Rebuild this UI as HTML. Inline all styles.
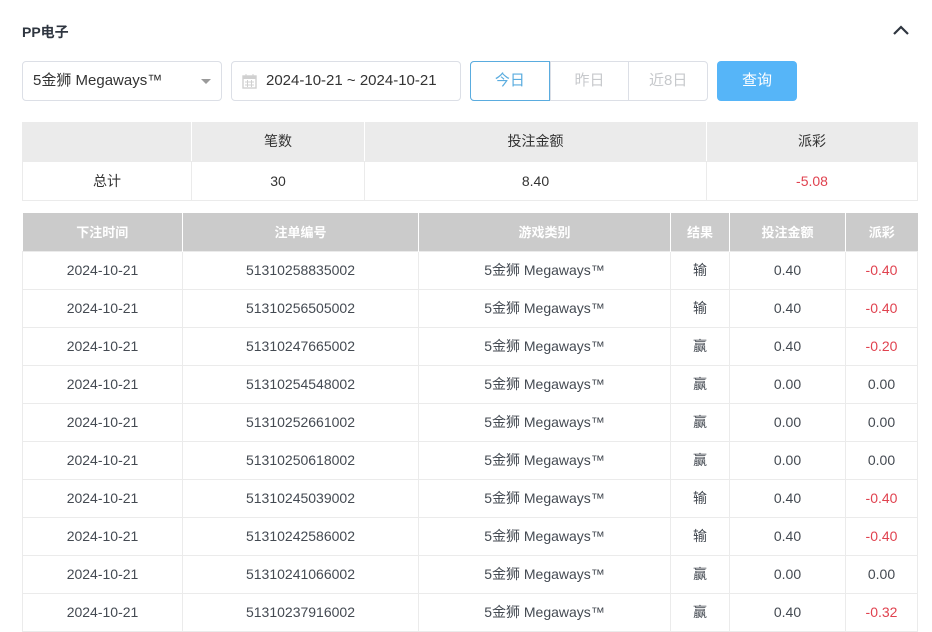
<!DOCTYPE html>
<html><head><meta charset="utf-8"><style>
*{box-sizing:border-box;margin:0;padding:0}
body{width:932px;height:632px;overflow:hidden;background:#fff;font-family:"Liberation Sans","Noto Sans CJK SC",sans-serif;color:#444a52;position:relative}
.abs{position:absolute}
.title{left:22px;top:22px;font-size:14px;font-weight:bold;color:#2f3640}
.chev{left:892px;top:24px}
.box{border:1px solid #dcdfe6;border-radius:4px;height:40px;font-size:15px;color:#333;line-height:38px}
.sel{left:22px;top:61px;width:200px;padding-left:10px}
.date{left:231px;top:61px;width:230px;padding-left:34px}
.btns{left:470px;top:61px;width:238px;height:40px;border:1px solid #dcdfe6;border-radius:4px;display:flex;font-size:15px;color:#c7c9cc;line-height:38px}
.btns div{flex:1;text-align:center;border-left:1px solid #dcdfe6}
.btns div:first-child{border:1px solid #5aacdf;color:#5aacdf;margin:-1px 0 -1px -1px;border-radius:4px 0 0 4px;line-height:38px}
.q{left:717px;top:61px;width:80px;height:40px;background:#56b5f8;border-radius:4px;color:#fff;font-size:15px;text-align:center;line-height:40px}
table{position:absolute;border-collapse:collapse;table-layout:fixed;font-size:14px;text-align:center}
.sum{left:22px;top:122px;width:896px}
.sum td{border:1px solid #ebebeb;height:39px;color:#333}
.sum tr:first-child td{background:#ebebeb;border-color:#fff #fff #ebebeb #fff;border-top:none}
.sum tr:first-child td:first-child{border-left:1px solid #ebebeb}
.sum tr:first-child td:last-child{border-right:1px solid #ebebeb}
.dt{left:22px;top:213px;width:896px}
.dt th{background:#cbcbcb;color:#fff;font-weight:bold;font-size:13px;height:38px;border-left:1px solid #fff}
.dt th:first-child{border-left:none}
.dt td{border:1px solid #ebebeb;height:38px;color:#444a52}
.r{color:#e0424f!important}
</style></head><body>
<div class="abs title">PP电子</div>
<svg class="abs chev" width="18" height="12" viewBox="0 0 18 12"><path d="M2 10 L9 3 L16 10" fill="none" stroke="#2f3640" stroke-width="2.2"/></svg>
<div class="abs box sel">5金狮 Megaways™<svg style="position:absolute;left:178px;top:17px" width="10" height="6"><path d="M0 0H10L5 5Z" fill="#9a9a9a"/></svg></div>
<div class="abs box date"><svg style="position:absolute;left:10px;top:12px" width="15" height="15" viewBox="0 0 15 15"><rect x="1" y="2" width="13" height="12" fill="none" stroke="#d0d0d0" stroke-width="1.4"/><rect x="1" y="2" width="13" height="3" fill="#d0d0d0"/><path d="M4 0V3M11 0V3M3 8h9M3 11h9M5.5 6v7M9.5 6v7" stroke="#d0d0d0"/></svg>2024-10-21 ~ 2024-10-21</div>
<div class="abs btns"><div>今日</div><div>昨日</div><div>近8日</div></div>
<div class="abs q">查询</div>
<table class="sum"><colgroup><col style="width:169px"><col style="width:173px"><col style="width:342px"><col></colgroup>
<tr><td></td><td>笔数</td><td>投注金额</td><td>派彩</td></tr>
<tr><td>总计</td><td>30</td><td>8.40</td><td class="r">-5.08</td></tr></table>
<table class="dt"><colgroup><col style="width:160px"><col style="width:236px"><col style="width:252px"><col style="width:59px"><col style="width:116px"><col></colgroup>
<tr><th>下注时间</th><th>注单编号</th><th>游戏类别</th><th>结果</th><th>投注金额</th><th>派彩</th></tr>
<tr><td>2024-10-21</td><td>51310258835002</td><td>5金狮 Megaways™</td><td>输</td><td>0.40</td><td class="r">-0.40</td></tr>
<tr><td>2024-10-21</td><td>51310256505002</td><td>5金狮 Megaways™</td><td>输</td><td>0.40</td><td class="r">-0.40</td></tr>
<tr><td>2024-10-21</td><td>51310247665002</td><td>5金狮 Megaways™</td><td>赢</td><td>0.40</td><td class="r">-0.20</td></tr>
<tr><td>2024-10-21</td><td>51310254548002</td><td>5金狮 Megaways™</td><td>赢</td><td>0.00</td><td>0.00</td></tr>
<tr><td>2024-10-21</td><td>51310252661002</td><td>5金狮 Megaways™</td><td>赢</td><td>0.00</td><td>0.00</td></tr>
<tr><td>2024-10-21</td><td>51310250618002</td><td>5金狮 Megaways™</td><td>赢</td><td>0.00</td><td>0.00</td></tr>
<tr><td>2024-10-21</td><td>51310245039002</td><td>5金狮 Megaways™</td><td>输</td><td>0.40</td><td class="r">-0.40</td></tr>
<tr><td>2024-10-21</td><td>51310242586002</td><td>5金狮 Megaways™</td><td>输</td><td>0.40</td><td class="r">-0.40</td></tr>
<tr><td>2024-10-21</td><td>51310241066002</td><td>5金狮 Megaways™</td><td>赢</td><td>0.00</td><td>0.00</td></tr>
<tr><td>2024-10-21</td><td>51310237916002</td><td>5金狮 Megaways™</td><td>赢</td><td>0.40</td><td class="r">-0.32</td></tr>
</table>
</body></html>
